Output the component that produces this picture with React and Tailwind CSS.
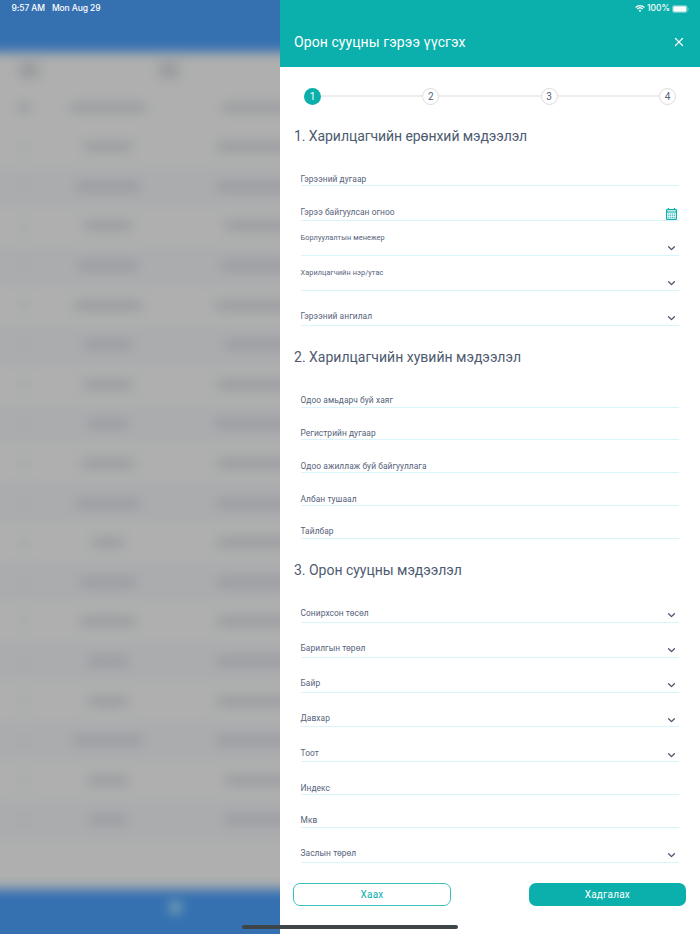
import { X } from "lucide-react";

const rows = [
  { name: "w-12", info: "w-36" },
  { name: "w-16", info: "w-36" },
  { name: "w-12", info: "w-32" },
  { name: "w-15", info: "w-34" },
  { name: "w-17", info: "w-37" },
  { name: "w-12", info: "w-32" },
  { name: "w-12", info: "w-36" },
  { name: "w-10", info: "w-37" },
  { name: "w-13", info: "w-36" },
  { name: "w-16", info: "w-36" },
  { name: "w-8", info: "w-36" },
  { name: "w-14", info: "w-36" },
  { name: "w-14", info: "w-36" },
  { name: "w-10", info: "w-36" },
  { name: "w-10", info: "w-36" },
  { name: "w-17", info: "w-36" },
  { name: "w-10", info: "w-32" },
  { name: "w-9", info: "w-32" },
];

const sections = [
  {
    title: "1. Харилцагчийн ерөнхий мэдээлэл",
    tracking: "tracking-[-0.07px]",
    fields: [
      { label: "Гэрээний дугаар", type: "text" },
      { label: "Гэрээ байгуулсан огноо", type: "date" },
      { label: "Борлуулалтын менежер", type: "select", small: true },
      { label: "Харилцагчийн нэр/утас", type: "select", small: true },
      { label: "Гэрээний ангилал", type: "select" },
    ],
  },
  {
    title: "2. Харилцагчийн хувийн мэдээлэл",
    tracking: "tracking-[0.01px]",
    fields: [
      { label: "Одоо амьдарч буй хаяг", type: "text" },
      { label: "Регистрийн дугаар", type: "text" },
      { label: "Одоо ажиллаж буй байгууллага", type: "text" },
      { label: "Албан тушаал", type: "text" },
      { label: "Тайлбар", type: "text" },
    ],
  },
  {
    title: "3. Орон сууцны мэдээлэл",
    tracking: "tracking-[-0.02px]",
    fields: [
      { label: "Сонирхсон төсөл", type: "select" },
      { label: "Барилгын төрөл", type: "select" },
      { label: "Байр", type: "select" },
      { label: "Давхар", type: "select" },
      { label: "Тоот", type: "select" },
      { label: "Индекс", type: "text" },
      { label: "Мкв", type: "text" },
      { label: "Заслын төрөл", type: "select" },
    ],
  },
];

function CalendarIcon() {
  return (
    <svg className="w-[11px] h-3" viewBox="0 0 11 12" fill="none" stroke="#0bafab">
      <path d="M2.5 0v2M8.5 0v2" strokeWidth="1.3" />
      <rect x="0.6" y="1.6" width="9.8" height="9.8" rx="0.6" strokeWidth="1.2" />
      <path d="M0.6 4h9.8" strokeWidth="1.1" />
      <path d="M2.2 6h6.8M2.2 7.7h6.8M2.2 9.4h6.8" strokeWidth="0.9" strokeDasharray="1.2 0.65" />
    </svg>
  );
}

function ChevronIcon() {
  return (
    <svg className="w-[7px] h-[5px]" viewBox="0 0 7 5" fill="none" stroke="#47536b" strokeWidth="1.3">
      <path d="M0.6 0.8 3.5 3.6 6.4 0.8" strokeLinecap="round" strokeLinejoin="round" />
    </svg>
  );
}

function Field({ label, type, small }) {
  const height = type === "text" ? "h-[32.8px]" : "h-[34.9px]";
  let labelPos = type === "text" ? "pb-[0.5px]" : "pb-[2.5px]";
  if (small) labelPos = "pb-[11.8px]";

  return (
    <div className={`${height} flex items-end justify-between border-b border-[#d9f5fb]`}>
      <span
        className={`${labelPos} whitespace-nowrap leading-[11px] text-[#56627a] ${
          small ? "text-[7.3px] tracking-[0.1px]" : "text-[8.4px] tracking-[0.07px]"
        }`}
      >
        {label}
      </span>
      {type === "date" && (
        <span className="mr-[2px] mb-[0.5px]">
          <CalendarIcon />
        </span>
      )}
      {type === "select" && (
        <span className="mr-1 mb-[3.6px] flex">
          <ChevronIcon />
        </span>
      )}
    </div>
  );
}

function Section({ title, tracking, fields }) {
  return (
    <section>
      <h2 className={`pt-5 pb-[6px] text-[14px] leading-[23px] whitespace-nowrap text-[#4d5a70] ${tracking}`}>
        {title}
      </h2>
      <div className="ml-[6.5px] mr-[7px]">
        {fields.map((f) => (
          <Field key={f.label} {...f} />
        ))}
      </div>
    </section>
  );
}

function Stepper() {
  return (
    <div className="flex items-center mx-[10px] h-[17px]">
      <div className="size-[17px] rounded-full bg-[#0bafab] text-white text-[10px] flex items-center justify-center">
        1
      </div>
      {[2, 3, 4].map((n) => (
        <div key={n} className="flex flex-1 items-center">
          <div className="flex-1 h-[2px] bg-[#ededee]" />
          <div className="size-[17px] rounded-full border border-[#dcdcde] text-[#56627a] text-[10px] flex items-center justify-center">
            {n}
          </div>
        </div>
      ))}
    </div>
  );
}

// bleeds 20px past every edge so the blur has no soft border
function TablePage() {
  return (
    <div className="absolute -inset-5 blur-[6px] flex flex-col bg-[#aeafae]">
      <div className="h-[72px] shrink-0 bg-[#3570b1]" />
      <div className="h-[36px] shrink-0 flex items-center pl-5">
        <div className="ml-[19px] w-5 h-4 bg-[#999a9d]" />
        <div className="ml-[120px] w-5 h-4 bg-[#999a9d]" />
      </div>
      <div className="h-[39px] shrink-0 flex items-center pl-5">
        <div className="w-12 flex justify-center">
          <div className="w-3 h-[9px] bg-[#999a9f]" />
        </div>
        <div className="w-30 flex justify-center">
          <div className="w-19 h-[9px] bg-[#999a9f]" />
        </div>
        <div className="ml-[54px] w-24 h-[9px] bg-[#999a9f]" />
      </div>
      {rows.map((r, i) => (
        <div
          key={i}
          className={`h-[39.6px] shrink-0 flex items-center pl-5 ${i % 2 ? "bg-[#abacae]" : ""}`}
        >
          <div className="w-12 flex justify-center">
            <div className="w-2 h-2 bg-[#a4a5a9]" />
          </div>
          <div className="w-30 flex justify-center">
            <div className={`${r.name} h-[9px] bg-[#999aa0]`} />
          </div>
          <div className="w-[242px] flex justify-center">
            <div className={`${r.info} h-[9px] bg-[#999aa0]`} />
          </div>
        </div>
      ))}
      <div className="mt-auto h-[65px] shrink-0 bg-[#3570b1]">
        <div className="ml-[189px] mt-3 size-[13px] rounded-full bg-[#80aab2]" />
      </div>
    </div>
  );
}

function StatusBar() {
  return (
    <div className="absolute top-0 inset-x-0 h-[17px] flex items-center justify-between pl-[11.5px] pr-[11px] text-white font-['Inter',sans-serif] text-[8.5px] font-medium">
      <div className="flex gap-[7px] whitespace-nowrap tracking-[-0.1px]">
        <span>9:57 AM</span>
        <span>Mon Aug 29</span>
      </div>
      <div className="flex items-center gap-[2px]">
        <svg className="w-[10px] h-[7px]" viewBox="0 0 10 7" fill="none" stroke="white" strokeWidth="1.3">
          <path d="M0.6 2.5c2.5-2.4 6.3-2.4 8.8 0M2.2 4.1c1.6-1.5 4-1.5 5.6 0" />
          <path d="M3.6 5.4c.8-.7 2-.7 2.8 0L5 6.9z" fill="white" stroke="none" />
        </svg>
        <span>100%</span>
        <svg className="w-[17px] h-2" viewBox="0 0 17 8">
          <rect x="0.4" y="0.4" width="14.8" height="7.2" rx="2" fill="none" stroke="white" strokeOpacity="0.5" strokeWidth="0.8" />
          <rect x="1.2" y="1.2" width="13.2" height="5.6" rx="1.2" fill="white" />
          <path d="M16 2.8c.8.3.8 2.1 0 2.4z" fill="white" fillOpacity="0.5" />
        </svg>
      </div>
    </div>
  );
}

export default function App() {
  return (
    <div className="relative w-[700px] h-[934px] overflow-hidden font-['Roboto',sans-serif]">
      <TablePage />

      <div className="absolute inset-y-0 right-0 w-[420px] bg-white flex flex-col">
        <header className="h-[67px] shrink-0 bg-[#0bafab] pt-[17px] pl-[14px] pr-[14px] flex items-center justify-between text-white">
          <h1 className="text-[14px] tracking-[0.08px] whitespace-nowrap">Орон сууцны гэрээ үүсгэх</h1>
          <X className="size-3.5" strokeWidth={2.1} />
        </header>

        <main className="pl-[14px] pr-[14px] pt-[20.5px]">
          <Stepper />
          {sections.map((s) => (
            <Section key={s.title} {...s} />
          ))}
        </main>

        <footer className="mt-auto mb-[28px] pl-[13.4px] pr-[14px] flex justify-between text-[10px] tracking-[0.2px]">
          <button className="w-[157.3px] h-[23px] rounded-[7px] border border-[#3cc0bc] text-[#0bafab]">Хаах</button>
          <button className="w-[157.3px] h-[23px] rounded-[7px] bg-[#0bafab] text-white">Хадгалах</button>
        </footer>
      </div>

      <StatusBar />
      <div className="absolute left-[242px] bottom-[5px] w-[216px] h-[4px] rounded-full bg-[#3e4549]" />
    </div>
  );
}
